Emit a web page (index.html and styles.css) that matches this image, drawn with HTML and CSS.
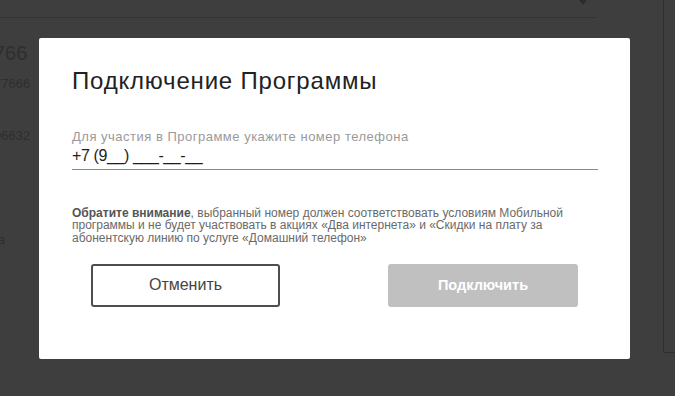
FILE: index.html
```html
<!DOCTYPE html>
<html lang="ru">
<head>
<meta charset="utf-8">
<title>Подключение Программы</title>
<link rel="stylesheet" href="styles.css">
</head>
<body>
<div class="page">
  <div class="main">
    <div class="topbar">
      <svg class="chev" width="10" height="6" viewBox="0 0 10 6"><path d="M1 0 L5 5 L9 0 Z" fill="#2c2c2c"/></svg>
    </div>
    <div class="list">
      <div class="big">766</div>
      <div class="small s1">77666</div>
      <div class="small s2">06632</div>
      <div class="small s3">a</div>
    </div>
  </div>
  <div class="side"></div>
</div>

<div class="modal">
  <h1 class="title">Подключение Программы</h1>
  <div class="field">
    <div class="label">Для участия в Программе укажите номер телефона</div>
    <div class="value">+7 (9__) ___-__-__</div>
  </div>
  <p class="note"><b>Обратите внимание</b>, выбранный номер должен соответствовать условиям Мобильной программы и не будет участвовать в акциях «Два интернета» и «Скидки на плату за абонентскую линию по услуге «Домашний телефон»</p>
  <div class="actions">
    <button class="btn btn-cancel">Отменить</button>
    <button class="btn btn-ok">Подключить</button>
  </div>
</div>
</body>
</html>
```
FILE: styles.css
```css
html, body {
  margin: 0;
  padding: 0;
  height: 100%;
  overflow: hidden;
}
body {
  background: #3e3e3e;
  font-family: "Liberation Sans", Arial, sans-serif;
}
.page {
  display: flex;
  height: 396px;
}
.main {
  width: 663px;
  border-right: 1px solid #2e2e2e;
  height: 352px;
}
.topbar {
  height: 17px;
  width: 596px;
  border-bottom: 1px solid #333;
  position: relative;
}
.chev {
  position: absolute;
  left: 578px;
  top: 0;
}
.list {
  color: #2e2e2e;
  margin-left: -6px;
}
.big {
  font-size: 20px;
  margin-top: 25px;
  line-height: 20px;
}
.small {
  font-size: 13px;
  line-height: 14px;
}
.s1 { margin-top: 14px; }
.s2 { margin-top: 38px; }
.s3 { margin-top: 90px; margin-left: 4px; }
.side {
  flex: 1;
  border-bottom: 1px solid #2e2e2e;
  height: 352px;
}

.modal {
  position: fixed;
  left: 39px;
  top: 38px;
  width: 591px;
  height: 321px;
  box-sizing: border-box;
  background: #fff;
  border-radius: 2px;
  padding: 29px 33px 0 33px;
}
.title {
  margin: 0;
  font-weight: normal;
  font-size: 24px;
  line-height: 28px;
  letter-spacing: 0.8px;
  color: #222;
}
.field {
  margin-top: 34px;
  width: 526px;
  border-bottom: 1px solid #8a8a8a;
  padding-bottom: 4px;
}
.label {
  font-size: 13px;
  line-height: 16px;
  letter-spacing: 0.5px;
  color: #9a9a9a;
}
.value {
  font-size: 16px;
  line-height: 18px;
  letter-spacing: -0.4px;
  color: #1e1e1e;
  margin-top: 2px;
}
.note {
  margin: 37px 0 0 0;
  font-size: 12px;
  line-height: 12.3px;
  color: #6a6a6a;
  width: 496px;
}
.note b {
  color: #555;
}
.actions {
  display: flex;
  justify-content: space-between;
  margin: 20px 19px 0 19px;
}
.btn {
  width: 190px;
  height: 43px;
  box-sizing: border-box;
  border-radius: 3px;
  font-family: "Liberation Sans", Arial, sans-serif;
  font-size: 16px;
  padding: 0;
  cursor: pointer;
}
.btn-cancel {
  background: #fff;
  border: 2px solid #4e4e4e;
  color: #444;
  width: 189px;
}
.btn-ok {
  background: #c0c0c0;
  border: none;
  color: #fff;
  font-size: 14.5px;
  font-weight: bold;
}
```
